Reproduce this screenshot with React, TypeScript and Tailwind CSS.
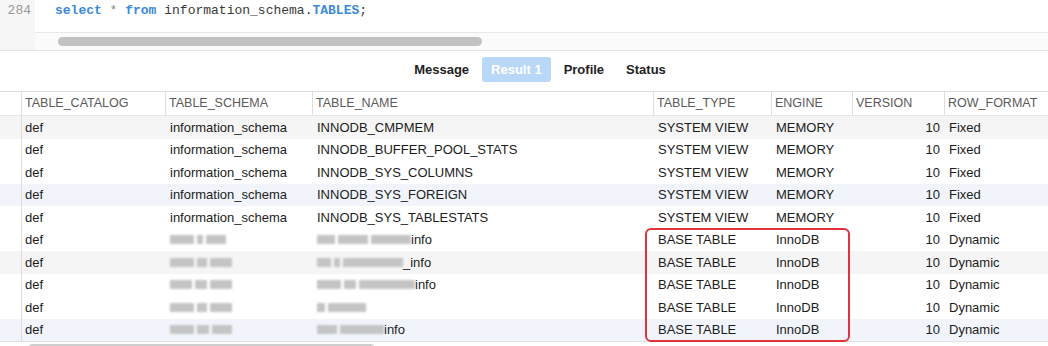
import React from 'react';

type Row = {
  schema: string | number[];
  name: string | { blur: number[]; tail: string };
  type: string;
  engine: string;
  rowFormat: string;
  bg?: 'gray' | 'blue';
};

const rows: Row[] = [
  { schema: 'information_schema', name: 'INNODB_CMPMEM', type: 'SYSTEM VIEW', engine: 'MEMORY', rowFormat: 'Fixed', bg: 'gray' },
  { schema: 'information_schema', name: 'INNODB_BUFFER_POOL_STATS', type: 'SYSTEM VIEW', engine: 'MEMORY', rowFormat: 'Fixed' },
  { schema: 'information_schema', name: 'INNODB_SYS_COLUMNS', type: 'SYSTEM VIEW', engine: 'MEMORY', rowFormat: 'Fixed' },
  { schema: 'information_schema', name: 'INNODB_SYS_FOREIGN', type: 'SYSTEM VIEW', engine: 'MEMORY', rowFormat: 'Fixed', bg: 'blue' },
  { schema: 'information_schema', name: 'INNODB_SYS_TABLESTATS', type: 'SYSTEM VIEW', engine: 'MEMORY', rowFormat: 'Fixed' },
  { schema: [24, 6, 20], name: { blur: [18, 30, 40], tail: 'info' }, type: 'BASE TABLE', engine: 'InnoDB', rowFormat: 'Dynamic' },
  { schema: [24, 10, 22], name: { blur: [14, 6, 60], tail: '_info' }, type: 'BASE TABLE', engine: 'InnoDB', rowFormat: 'Dynamic', bg: 'gray' },
  { schema: [22, 12, 22], name: { blur: [24, 12, 56], tail: 'info' }, type: 'BASE TABLE', engine: 'InnoDB', rowFormat: 'Dynamic' },
  { schema: [24, 10, 22], name: { blur: [8, 38], tail: '' }, type: 'BASE TABLE', engine: 'InnoDB', rowFormat: 'Dynamic' },
  { schema: [24, 12, 20], name: { blur: [20, 44], tail: 'info' }, type: 'BASE TABLE', engine: 'InnoDB', rowFormat: 'Dynamic', bg: 'blue' },
];

const headers = ['TABLE_CATALOG', 'TABLE_SCHEMA', 'TABLE_NAME', 'TABLE_TYPE', 'ENGINE', 'VERSION', 'ROW_FORMAT'];

const gridCols = 'grid grid-cols-[22px_144px_147px_341px_118px_81px_92px_1fr]';

// redacted bits of the screenshot, drawn as soft gray smudges
const Smudge = ({ widths }: { widths: number[] }) => (
  <span className="flex items-center gap-[3px]">
    {widths.map((w, i) => (
      <span key={i} className="h-[9px] bg-[#c4c4c4] blur-[1px]" style={{ width: w }} />
    ))}
  </span>
);

const App = () => {
  const tabs = ['Message', 'Result 1', 'Profile', 'Status'];

  return (
    <div className="w-[1048px] h-[346px] overflow-hidden bg-white font-['Liberation_Sans',Arial,sans-serif] text-[13px] text-[#1c1c1c]">
      {/* editor */}
      <div className="flex h-[51px] border-b border-[#e3e3e3]">
        <div className="w-[35px] bg-[#f6f6f6] pt-[2px] pr-[4px] text-right font-['Liberation_Mono',monospace] text-[13px] leading-[17px] text-[#9a9a9a]">
          284
        </div>
        <div className="flex-1 flex flex-col">
          <div className="h-[32px] pl-[20px] pt-[2px] font-['Liberation_Mono',monospace] text-[13px] leading-[17px] text-[#3a3a3a] whitespace-pre">
            <span className="text-[#3b8ad9] font-bold">select</span>
            <span className="text-[#8a8a8a]"> * </span>
            <span className="text-[#3b8ad9] font-bold">from</span>
            <span> information_schema.</span>
            <span className="text-[#3b8ad9] font-bold">TABLES</span>
            <span>;</span>
          </div>
          <div className="flex-1 border-t border-[#e8e8e8] bg-[#fbfbfb] pl-[23px] pt-[4px]">
            <div className="w-[424px] h-[9px] rounded-full bg-[#c2c2c2]" />
          </div>
        </div>
      </div>

      {/* result tabs */}
      <div className="flex justify-center gap-[4px] pl-[32px] pt-[6px] pb-[9px]">
        {tabs.map((t) => (
          <div
            key={t}
            className={`h-[25px] px-[9px] flex items-center rounded-[3px] font-bold text-[13px] ${
              t === 'Result 1' ? 'bg-[#b9d7f6] text-white' : 'text-[#222]'
            }`}
          >
            {t}
          </div>
        ))}
      </div>

      {/* grid */}
      <div className="relative border-t border-[#dcdcdc]">
        <div className={`${gridCols} h-[24px] border-b border-[#e6e6e6] text-[12.5px] text-[#5a5a5a]`}>
          <div className="border-r border-[#dedede]" />
          {headers.map((h, i) => (
            <div key={h} className={`flex items-center pl-[3px] ${i < headers.length - 1 ? 'border-r border-[#dedede]' : ''}`}>
              {h}
            </div>
          ))}
        </div>

        {rows.map((r, idx) => (
          <div
            key={idx}
            className={`${gridCols} h-[22.5px] items-center ${
              r.bg === 'gray' ? 'bg-[#f5f5f5]' : r.bg === 'blue' ? 'bg-[#f1f5fb]' : 'bg-white'
            }`}
          >
            <div className="h-full border-r border-[#dedede]" />
            <div className="pl-[3px]">def</div>
            <div className="pl-[4px]">
              {typeof r.schema === 'string' ? r.schema : <Smudge widths={r.schema} />}
            </div>
            <div className="pl-[4px]">
              {typeof r.name === 'string' ? (
                r.name
              ) : (
                <span className="flex items-center">
                  <Smudge widths={r.name.blur} />
                  <span>{r.name.tail}</span>
                </span>
              )}
            </div>
            <div className="pl-[4px]">{r.type}</div>
            <div className="pl-[4px]">{r.engine}</div>
            <div className="pr-[5px] text-right">10</div>
            <div className="pl-[4px]">{r.rowFormat}</div>
          </div>
        ))}

        <div className="h-[6px] border-t border-[#e2e2e2] pl-[28px] pt-[2px]">
          <div className="w-[347px] h-[9px] rounded-full bg-[#cfcfcf]" />
        </div>

        {/* annotation */}
        <div className="absolute left-[645px] top-[136px] w-[205px] h-[114px] rounded-[6px] border-[2.5px] border-[#e2323f]" />
      </div>
    </div>
  );
};

export default App;
